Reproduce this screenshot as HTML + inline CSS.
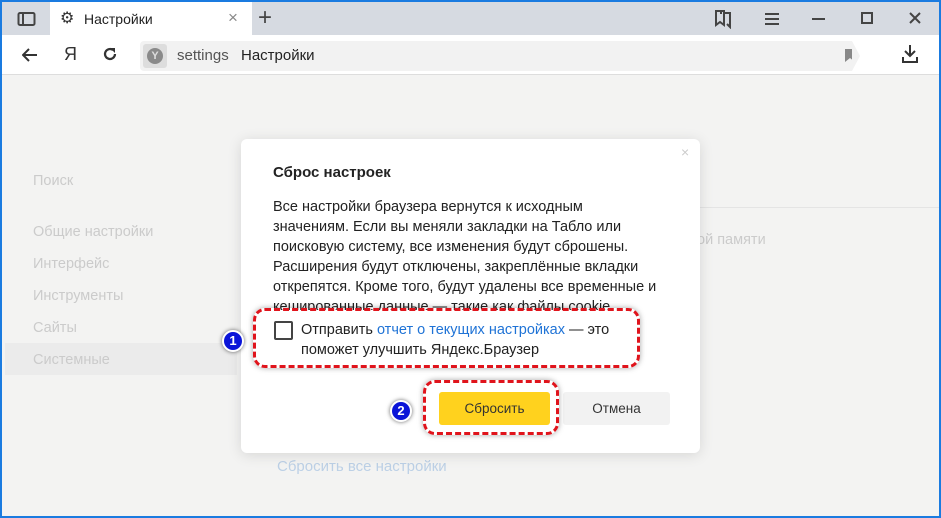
<!DOCTYPE html>
<html><head><meta charset="utf-8"><style>
*{margin:0;padding:0;box-sizing:border-box}
body{width:941px;height:518px;overflow:hidden;font-family:"Liberation Sans","DejaVu Sans",sans-serif;background:#1a7be0;position:relative}
#win{position:absolute;left:2px;top:2px;width:937px;height:514px;background:#f3f3f2;overflow:hidden}
.abs{position:absolute}
#tabs{left:0;top:0;width:937px;height:33px;background:#d6dae1}
#tab{left:48px;top:0;width:202px;height:33px;background:#fff}
#tb{left:0;top:33px;width:937px;height:40px;background:#fff;border-bottom:1px solid #ddd}
#addr{left:138px;top:6px;width:712px;height:30px;background:#f2f2f2;border-radius:4px 0 0 4px}
.side{left:31px;font-size:14.5px;color:#cbcbcb}
.dlg{left:239px;top:137px;width:459px;height:314px;background:#fff;border-radius:6px;box-shadow:0 2px 14px rgba(0,0,0,.12)}
.body{font-size:14.5px;color:#222;line-height:20px}
.dash{border:3px dashed #e0141c;border-radius:12px;box-shadow:0 0 6px rgba(0,0,0,.35)}
.badge{width:22px;height:22px;border-radius:50%;background:#0a14d8;border:2px solid #fff;box-shadow:0 0 4px rgba(0,0,0,.6);color:#fff;font-weight:bold;font-size:13px;text-align:center;line-height:18px}
</style></head><body><div id="win">
<div id="tabs" class="abs">
 <svg class="abs" style="left:15px;top:9px" width="20" height="16"><rect x="1.5" y="2" width="16" height="12" rx="1.5" fill="none" stroke="#444" stroke-width="2"/><line x1="6" y1="3" x2="6" y2="13" stroke="#444" stroke-width="2"/></svg>
 <div id="tab" class="abs">
  <div class="abs" style="left:10px;top:6px;font-size:16px;color:#333">⚙</div>
  <div class="abs" style="left:34px;top:9px;font-size:14px;color:#222">Настройки</div>
  <div class="abs" style="left:178px;top:6px;font-size:17px;color:#888">×</div>
 </div>
 <div class="abs" style="left:256px;top:2px;font-size:24px;color:#444">+</div>
 <svg class="abs" style="left:712px;top:7px" width="18" height="20"><path d="M2 2h8v14l-4-3-4 3z M7 5V2 M10 4h6v14l-3-3" fill="none" stroke="#444" stroke-width="2"/></svg>
 <svg class="abs" style="left:762px;top:10px" width="16" height="14"><path d="M1 2h14M1 7h14M1 12h14" stroke="#444" stroke-width="2"/></svg>
 <div class="abs" style="left:810px;top:16px;width:13px;height:2px;background:#444"></div>
 <div class="abs" style="left:859px;top:10px;width:12px;height:12px;border:2px solid #444"></div>
 <svg class="abs" style="left:907px;top:10px" width="12" height="12"><path d="M1 1l10 10M11 1L1 11" stroke="#444" stroke-width="2"/></svg>
</div>
<div id="tb" class="abs">
 <svg class="abs" style="left:20px;top:13px" width="16" height="14"><path d="M15 7H2M7 1L1 7l6 6" fill="none" stroke="#333" stroke-width="2"/></svg>
 <div class="abs" style="left:62px;top:9px;font-size:18px;color:#333">Я</div>
 <svg class="abs" style="left:100px;top:11px" width="16" height="16"><path d="M13 8a5 5 0 1 1-2-4" fill="none" stroke="#333" stroke-width="2.2"/><path d="M8 2h5v5z" fill="#333"/></svg>
 <div id="addr" class="abs">
  <div class="abs" style="left:3px;top:3px;width:24px;height:24px;background:#ddd;border-radius:3px"></div>
  <div class="abs" style="left:7px;top:7px;width:16px;height:16px;background:#8a8a8a;border-radius:50%;color:#ddd;font-size:11px;text-align:center;line-height:16px;font-weight:bold">Y</div>
  <div class="abs" style="left:37px;top:6px;font-size:15px;color:#555">settings</div>
  <div class="abs" style="left:101px;top:6px;font-size:15px;color:#222">Настройки</div>
  <svg class="abs" style="left:705px;top:8px" width="10" height="13"><path d="M0 0h10v13l-5-4-5 4z" fill="#888"/></svg>
 </div>
 <svg class="abs" style="left:850px;top:6px" width="10" height="30"><path d="M0 0l8 15-8 15z" fill="#f2f2f2"/></svg>
 <svg class="abs" style="left:899px;top:9px" width="18" height="20"><path d="M9 1v11M4 7l5 5 5-5M2 13v5h14v-5" fill="none" stroke="#333" stroke-width="2"/></svg>
</div>
<div class="abs side" style="top:171px">Поиск</div>
<div class="abs side" style="top:222px">Общие настройки</div>
<div class="abs side" style="top:254px">Интерфейс</div>
<div class="abs side" style="top:286px">Инструменты</div>
<div class="abs side" style="top:318px">Сайты</div>
<div class="abs" style="left:3px;top:341px;width:232px;height:32px;background:#ebebeb"></div>
<div class="abs side" style="top:350px">Системные</div>
<div class="abs" style="left:698px;top:205px;width:239px;height:1px;background:#e4e4e4"></div>
<div class="abs side" style="left:695px;top:230px">ой памяти</div>
<div class="abs" style="left:275px;top:456px;font-size:15px;color:#bcd0e6">Сбросить все настройки</div>
<div class="abs dlg">
 <div class="abs" style="left:440px;top:5px;color:#ccc;font-size:14px">×</div>
 <div class="abs" style="left:32px;top:25px;font-size:15px;font-weight:bold;color:#222">Сброс настроек</div>
 <div class="abs body" style="left:32px;top:58px;width:420px">Все настройки браузера вернутся к исходным<br>значениям. Если вы меняли закладки на Табло или<br>поисковую систему, все изменения будут сброшены.<br>Расширения будут отключены, закреплённые вкладки<br>открепятся. Кроме того, будут удалены все временные и<br>кешированные данные — такие как файлы cookie.</div>
 <div class="abs" style="left:0;top:171px;width:459px;height:60px;background:#fff"></div>
 <div class="abs" style="left:33px;top:182px;width:19px;height:19px;border:2px solid #444;border-radius:2px"></div>
 <div class="abs body" style="left:60px;top:181px">Отправить <span style="color:#1f73d6">отчет о текущих настройках</span> — это<br>поможет улучшить Яндекс.Браузер</div>
 <div class="abs" style="left:198px;top:253px;width:111px;height:33px;background:#ffd21e;border-radius:3px;font-size:13.5px;color:#333;text-align:center;line-height:33px">Сбросить</div>
 <div class="abs" style="left:322px;top:253px;width:107px;height:33px;background:#f2f2f2;border-radius:3px;font-size:13.5px;color:#333;text-align:center;line-height:33px">Отмена</div>
</div>
<div class="abs dash" style="left:251px;top:306px;width:387px;height:60px"></div>
<div class="abs dash" style="left:421px;top:378px;width:136px;height:55px"></div>
<div class="abs" style="left:0;top:0"></div>
<div class="abs" style="left:256px;top:301px;width:370px;height:6px"></div>
<div class="abs badge" style="left:220px;top:328px">1</div>
<div class="abs badge" style="left:388px;top:398px">2</div>
</div></body></html>
